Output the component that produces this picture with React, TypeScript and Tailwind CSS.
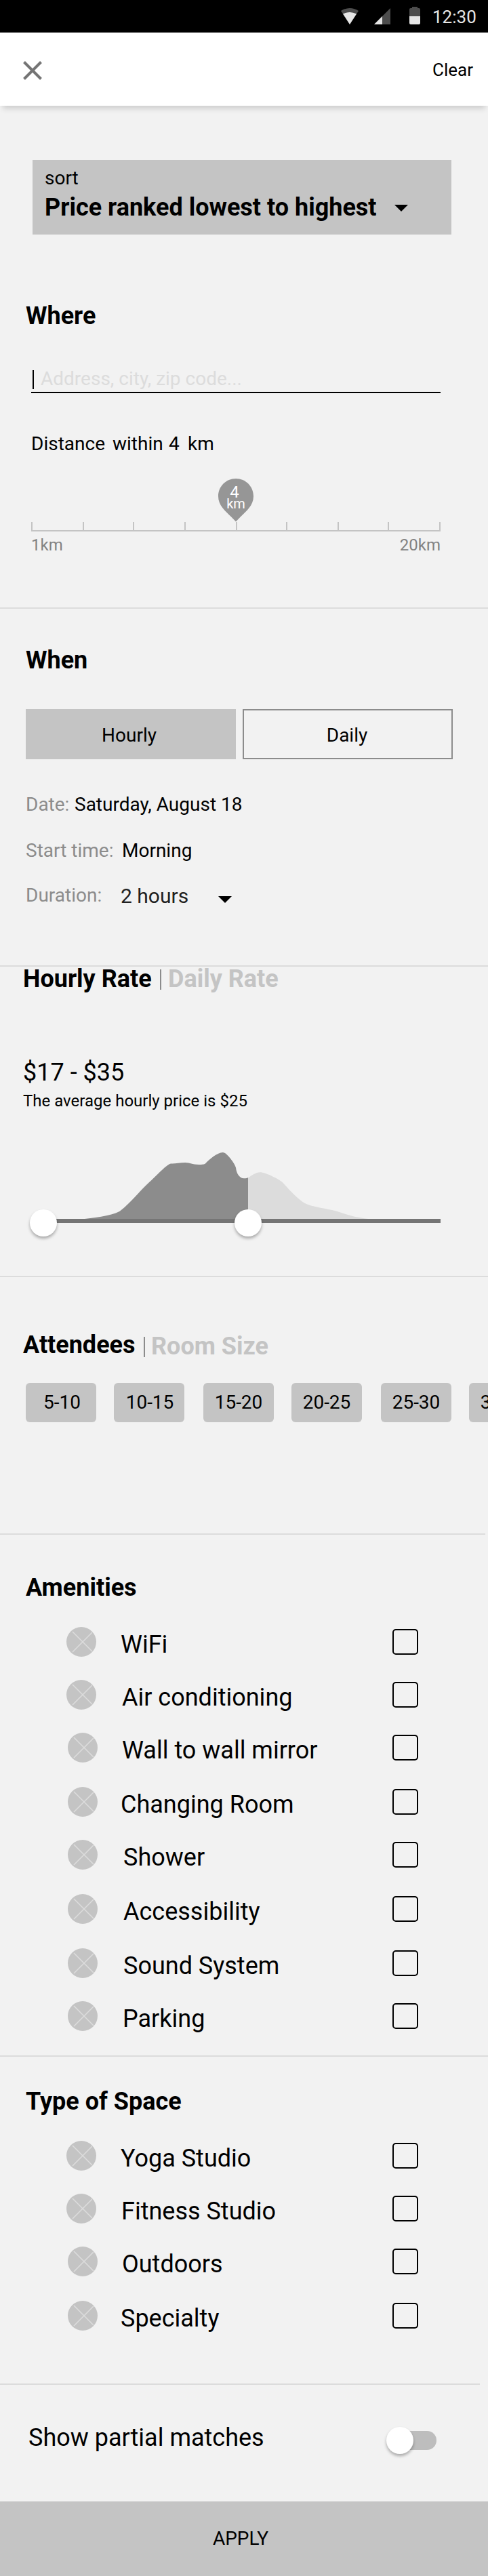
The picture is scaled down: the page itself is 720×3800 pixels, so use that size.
import React from "react";

const amenities = [
  { label: "WiFi", row: "h-[78px]", icon: "ml-[98px]", text: "ml-[36px]" },
  { label: "Air conditioning", row: "h-[78px]", icon: "ml-[98px]", text: "ml-[38px]" },
  { label: "Wall to wall mirror", row: "h-[80px]", icon: "ml-[100px]", text: "ml-[36px]" },
  { label: "Changing Room", row: "h-[78px]", icon: "ml-[100px]", text: "ml-[34px]" },
  { label: "Shower", row: "h-[80px]", icon: "ml-[100px]", text: "ml-[38px]" },
  { label: "Accessibility", row: "h-[80px]", icon: "ml-[100px]", text: "ml-[38px]" },
  { label: "Sound System", row: "h-[78px]", icon: "ml-[100px]", text: "ml-[38px]" },
  { label: "Parking", row: "h-[80px]", icon: "ml-[100px]", text: "ml-[37px]" },
];

const spaces = [
  { label: "Yoga Studio", row: "h-[78px]", icon: "ml-[98px]", text: "ml-[36px]" },
  { label: "Fitness Studio", row: "h-[78px]", icon: "ml-[98px]", text: "ml-[37px]" },
  { label: "Outdoors", row: "h-[80px]", icon: "ml-[100px]", text: "ml-[36px]" },
  { label: "Specialty", row: "h-[80px]", icon: "ml-[100px]", text: "ml-[34px]" },
];

const chips = [
  { label: "5-10", gap: "ml-[38px] pl-[3px]" },
  { label: "10-15", gap: "ml-[26px] pl-[2px]" },
  { label: "15-20", gap: "ml-[28px]" },
  { label: "20-25", gap: "ml-[26px]" },
  { label: "25-30", gap: "ml-[28px]" },
  { label: "30-35", gap: "ml-[26px]" },
];

const ticks = [1, 77, 151, 227, 303, 377, 453, 527, 603];

function OptionRow({ label, row, icon, text }: { label: string; row: string; icon: string; text: string }) {
  return (
    <label className={`flex items-start ${row}`}>
      <svg className={`h-11 w-11 shrink-0 ${icon}`} viewBox="0 0 44 44">
        <circle cx="22" cy="22" r="22" fill="#c4c4c4" />
        <path d="M9 7L38 36M38 8L9 37" stroke="#dcdcdc" strokeWidth="1.6" />
      </svg>
      <span className={`mt-1 w-[360px] whitespace-nowrap text-[36px] leading-[44px] ${text}`}>{label}</span>
      <span className="mt-[3px] ml-auto mr-[103px] h-[38px] w-[38px] shrink-0 rounded-[5px] border-2 border-black" />
    </label>
  );
}

function Caret({ className }: { className: string }) {
  return (
    <svg className={`h-[10px] w-5 shrink-0 ${className}`} viewBox="0 0 20 10">
      <path d="M0 0H20L10 10Z" />
    </svg>
  );
}

export default function App() {
  return (
    <div className="flex h-[3800px] w-[720px] flex-col overflow-hidden bg-[#f2f2f2] font-['Roboto',sans-serif] text-black">
      <div className="flex h-12 shrink-0 bg-black">
        <svg className="h-12 w-[640px]" viewBox="0 0 640 48">
          <path d="M503 16Q516 8 529 16L516 36Z" fill="#4d4d4d" />
          <path d="M506 20.500Q516 15.500 526 20.500L516 36Z" fill="#e6e6e6" />
          <path d="M552 36L576 12V36Z" fill="#4d4d4d" />
          <path d="M552 36L564 24V36Z" fill="#e6e6e6" />
          <path d="M604 24V14Q604 12 606 12H608V10H616V12H618Q620 12 620 14V24Z" fill="#4d4d4d" />
          <path d="M604 24H620V34Q620 36 618 36H606Q604 36 604 34Z" fill="#e6e6e6" />
        </svg>
        <span className="-ml-[2px] mt-[9px] h-8 text-[26px] leading-8 text-[#e6e6e6]">12:30</span>
      </div>
      <header className="z-10 flex h-[108px] shrink-0 items-start justify-between bg-white pr-[22px] pl-[34px] shadow-[0_8px_8px_-4px_rgba(0,0,0,0.16)]">
        <svg className="mt-[42px] h-7 w-7" viewBox="0 0 28 28">
          <path d="M1.500 1.500L26.500 26.500M26.500 1.500L1.500 26.500" stroke="#757575" strokeWidth="4" />
        </svg>
        <span className="mt-[39px] text-[26px] leading-8">Clear</span>
      </header>

      <div className="mt-20 ml-12 flex h-[110px] w-[618px] shrink-0 flex-col bg-[#c4c4c4] pl-[18px]">
        <span className="mt-[11px] text-[28px] leading-8">sort</span>
        <div className="mt-[7px] flex">
          <span className="w-[516px] whitespace-nowrap text-[36px] font-bold leading-[40px]">Price ranked lowest to highest</span>
          <Caret className="mt-4" />
        </div>
      </div>

      <section className="flex h-[552px] shrink-0 flex-col border-b-2 border-[#dcdcdc]">
        <h2 className="mt-[100px] ml-[38px] text-[36px] font-bold leading-[40px]">Where</h2>
        <div className="mt-[60px] ml-[46px] flex h-[34px] w-[604px] border-b-2 border-black">
          <span className="ml-[2px] h-7 w-[2px] bg-black" />
          <span className="-mt-[3px] ml-[10px] text-[28px] leading-8 text-[#dcdcdc]">Address, city, zip code...</span>
        </div>
        <div className="mt-[59px] ml-[46px] flex text-[28px] leading-8">
          <span className="w-[120px]">Distance</span>
          <span className="w-[83px]">within</span>
          <span className="w-[28px]">4</span>
          <span>km</span>
        </div>
        <svg className="mt-[35px] ml-[46px] h-[78px] w-[604px] shrink-0" viewBox="0 0 604 78">
          <path d="M302 0C316.500 0 328 11.500 328 26C328 42 314 50 302 63.500C290 50 276 42 276 26C276 11.500 287.500 0 302 0Z" fill="#969696" />
          <g stroke="#c4c4c4" strokeWidth="2">
            {ticks.map((x) => (
              <path key={x} d={`M${x} 64V78`} />
            ))}
            <path d="M0 77H604" />
          </g>
          <text x="300" y="28" textAnchor="middle" fontSize="24" fill="#fff">4</text>
          <text x="302" y="44" textAnchor="middle" fontSize="20" fill="#fff">km</text>
        </svg>
        <div className="mt-1 ml-[46px] flex w-[604px] justify-between text-[24px] leading-8 text-[#828282]">
          <span>1km</span>
          <span>20km</span>
        </div>
      </section>

      <section className="flex h-[528px] shrink-0 flex-col border-b-2 border-[#dcdcdc]">
        <h2 className="mt-[56px] ml-[38px] text-[36px] font-bold leading-[40px]">When</h2>
        <div className="mt-[52px] ml-[38px] flex h-[74px] gap-[10px] text-[28px] leading-8">
          <div className="w-[310px] bg-[#c4c4c4] pt-[23px] pr-[5px] text-center">Hourly</div>
          <div className="w-[310px] border-2 border-[#8c8c8c] pt-[21px] pr-[2px] text-center">Daily</div>
        </div>
        <div className="mt-[51px] ml-[38px] flex text-[28px] leading-8">
          <span className="w-[72px] text-[#8c8c8c]">Date:</span>
          <span>Saturday, August 18</span>
        </div>
        <div className="mt-9 ml-[38px] flex text-[28px] leading-8">
          <span className="w-[142px] text-[#8c8c8c]">Start time:</span>
          <span>Morning</span>
        </div>
        <div className="mt-[34px] ml-[38px] flex leading-8">
          <span className="w-[140px] text-[28px] text-[#8c8c8c]">Duration:</span>
          <span className="mt-[1px] w-[144px] text-[30px] text-[#212121]">2 hours</span>
          <Caret className="mt-[17px]" />
        </div>
      </section>

      <section className="flex h-[458px] shrink-0 flex-col border-b-2 border-[#dcdcdc]">
        <div className="-mt-[2px] ml-[34px] flex text-[36px] font-bold leading-[40px]">
          <h2 className="w-[202px]">Hourly Rate</h2>
          <span className="mt-[6px] h-[30px] w-[2px] bg-[#8c8c8c]" />
          <h2 className="ml-[10px] text-[#c4c4c4]">Daily Rate</h2>
        </div>
        <p className="mt-[98px] ml-[34px] text-[36px] leading-[40px]">$17 - $35</p>
        <p className="mt-[6px] ml-[34px] text-[24px] leading-8">The average hourly price is $25</p>
        <svg className="mt-[56px] ml-[34px] h-[136px] w-[630px] shrink-0 overflow-visible" viewBox="34 1696 630 136">
          <path d="M366 1800V1737.300C372 1734 377 1729.300 384 1729.300C391 1729.300 411 1739 416.700 1744C421 1748 436 1767 450 1775C461 1781 485 1783 500 1787.700C515 1793 527 1796 547 1798.500Z" fill="#dcdcdc" />
          <path d="M117 1799C138 1796 162 1794.500 176.700 1786.700C190 1777 208 1755 218.300 1745.700C230 1736 244 1719 252 1716.600C258 1716.600 265 1715 273.300 1715C281 1715 283 1718 293.300 1718C299 1718 301 1717.500 302.700 1716.700C309 1710 321 1700 328.500 1700C334 1699 347 1717 348 1722.500C349 1732 354 1738.300 360 1738.300C363 1738.300 365 1737.800 366 1737.300V1799Z" fill="#8c8c8c" />
          <path d="M64 1801H650" stroke="#757575" strokeWidth="6" />
          <g fill="#fff" className="drop-shadow-[0_3px_2px_rgba(0,0,0,0.3)]">
            <circle cx="64" cy="1804" r="20" />
            <circle cx="366" cy="1804" r="20" />
          </g>
        </svg>
      </section>

      <section className="flex h-[380px] shrink-0 flex-col">
        <div className="mt-20 ml-[34px] flex text-[36px] font-bold leading-[40px]">
          <h2 className="w-[178px]">Attendees</h2>
          <span className="mt-2 h-[30px] w-[2px] bg-[#8c8c8c]" />
          <h2 className="mt-[2px] ml-[9px] text-[#c4c4c4]">Room Size</h2>
        </div>
        <div className="mt-[34px] flex h-[58px]">
          {chips.map((chip) => (
            <button key={chip.label} className={`h-[58px] w-[104px] shrink-0 rounded-[6px] bg-[#c4c4c4] text-[28px] leading-8 ${chip.gap}`}>
              {chip.label}
            </button>
          ))}
        </div>
        <div className="mt-auto h-[2px] w-[716px] bg-[#dcdcdc]" />
      </section>

      <section className="flex h-[770px] shrink-0 flex-col border-b-2 border-[#dcdcdc]">
        <h2 className="mt-[58px] ml-[38px] text-[36px] font-bold leading-[40px]">Amenities</h2>
        <div className="mt-[38px] flex flex-col">
          {amenities.map((item) => (
            <OptionRow key={item.label} label={item.label} row={item.row} icon={item.icon} text={item.text} />
          ))}
        </div>
      </section>

      <section className="flex h-[484px] shrink-0 flex-col">
        <h2 className="mt-[46px] ml-[38px] text-[36px] font-bold leading-[40px]">Type of Space</h2>
        <div className="mt-[38px] flex flex-col">
          {spaces.map((item) => (
            <OptionRow key={item.label} label={item.label} row={item.row} icon={item.icon} text={item.text} />
          ))}
        </div>
        <div className="mt-auto h-[2px] w-[708px] bg-[#dcdcdc]" />
      </section>

      <section className="flex h-[172px] shrink-0">
        <span className="mt-[58px] ml-[42px] text-[36px] leading-[40px]">Show partial matches</span>
        <div className="mt-[68px] mr-[76px] ml-auto h-7 w-[68px] rounded-full bg-[#bdbdbd]">
          <div className="-mt-[6px] -ml-[6px] h-10 w-10 rounded-full bg-white shadow-[0_3px_4px_rgba(0,0,0,0.3)]" />
        </div>
      </section>

      <button className="h-[110px] w-full shrink-0 bg-[#c4c4c4] pr-[10px] text-[28px] leading-8">APPLY</button>
    </div>
  );
}
